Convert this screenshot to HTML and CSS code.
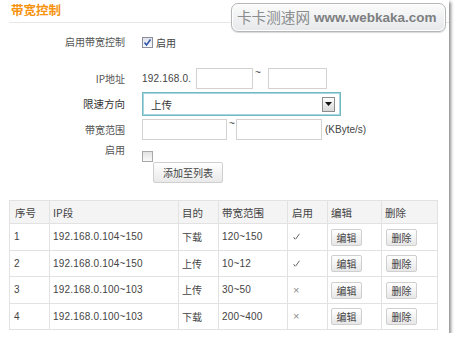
FILE: index.html
```html
<!DOCTYPE html>
<html lang="zh-CN">
<head>
<meta charset="utf-8">
<title>带宽控制</title>
<link rel="stylesheet" href="styles.css">
</head>
<body>
<div class="card">
  <div class="head"><span class="title">带宽控制</span></div>
  <div class="wm"><span class="wm-cn">卡卡测速网</span><span class="wm-en">www.webkaka.com</span></div>

  <div class="form">
    <div class="row r1">
      <span class="lbl">启用带宽控制</span>
      <div class="ctl">
        <span class="cb on"><svg width="9" height="9" viewBox="0 0 9 9"><path d="M1.5 4.5 L3.5 7 L7.5 1.5" fill="none" stroke="#2a4fa8" stroke-width="1.4"/></svg></span>
        <span class="cb-t">启用</span>
      </div>
    </div>
    <div class="row r-ip">
      <span class="lbl">IP地址</span>
      <div class="ctl">
        <span class="num ip-pre">192.168.0.</span>
        <span class="inp w57"></span>
        <span class="tilde t1">~</span>
        <span class="inp w59"></span>
      </div>
    </div>
    <div class="row r-sel">
      <span class="lbl dark">限速方向</span>
      <div class="ctl">
        <div class="sel"><span class="sel-t">上传</span><span class="arrow"><svg width="7" height="4" viewBox="0 0 7 4"><path d="M0 0 L7 0 L3.5 4 Z" fill="#111"/></svg></span></div>
      </div>
    </div>
    <div class="row r-bw">
      <span class="lbl">带宽范围</span>
      <div class="ctl">
        <span class="inp w84"></span>
        <span class="tilde t2">~</span>
        <span class="inp w85"></span>
        <span class="num unit">(KByte/s)</span>
      </div>
    </div>
    <div class="row r-en">
      <span class="lbl">启用</span>
      <div class="ctl"><span class="cb off"></span></div>
    </div>
    <div class="row r-btn">
      <span class="lbl"></span>
      <div class="ctl"><span class="btn">添加至列表</span></div>
    </div>
  </div>

  <table class="tbl">
    <colgroup>
      <col class="c1"><col class="c2"><col class="c3"><col class="c4"><col class="c5"><col class="c6"><col class="c7">
    </colgroup>
    <thead>
      <tr><th>序号</th><th>IP段</th><th>目的</th><th>带宽范围</th><th>启用</th><th>编辑</th><th>删除</th></tr>
    </thead>
    <tbody>
      <tr><td class="num">1</td><td class="num">192.168.0.104~150</td><td>下载</td><td class="num">120~150</td><td><svg class="ok" width="7" height="7" viewBox="0 0 7 7"><path d="M0.8 4.2 L1.8 6.2 M2.6 6.2 L6.4 0.8" fill="none" stroke="#555" stroke-width="0.9"/></svg></td><td><span class="sbtn">编辑</span></td><td><span class="sbtn">删除</span></td></tr>
      <tr><td class="num">2</td><td class="num">192.168.0.104~150</td><td>上传</td><td class="num">10~12</td><td><svg class="ok" width="7" height="7" viewBox="0 0 7 7"><path d="M0.8 4.2 L1.8 6.2 M2.6 6.2 L6.4 0.8" fill="none" stroke="#555" stroke-width="0.9"/></svg></td><td><span class="sbtn">编辑</span></td><td><span class="sbtn">删除</span></td></tr>
      <tr><td class="num">3</td><td class="num">192.168.0.100~103</td><td>上传</td><td class="num">30~50</td><td class="x">×</td><td><span class="sbtn">编辑</span></td><td><span class="sbtn">删除</span></td></tr>
      <tr><td class="num">4</td><td class="num">192.168.0.100~103</td><td>下载</td><td class="num">200~400</td><td class="x">×</td><td><span class="sbtn">编辑</span></td><td><span class="sbtn">删除</span></td></tr>
    </tbody>
  </table>
</div>
</body>
</html>
```

FILE: styles.css
```css
html, body {
  margin: 0;
  padding: 0;
  background: #fff;
}
body {
  font-family: "Noto Sans CJK SC", "Liberation Sans", sans-serif;
  font-size: 10px;
  color: #444;
}
.card {
  position: relative;
  box-sizing: border-box;
  width: 449px;
  height: 333px;
  padding-left: 9px;
  background: #fff;
  box-shadow: 2px 2px 3px rgba(0, 0, 0, 0.45);
}
.head {
  height: 22px;
  border-bottom: 1px solid #e6e6e6;
}
.title {
  display: block;
  padding-left: 2px;
  line-height: 20px;
  font-size: 12.5px;
  font-weight: bold;
  color: #f5930f;
}
.wm {
  position: absolute;
  left: 231px;
  top: 3px;
  box-sizing: border-box;
  width: 215px;
  height: 29px;
  border: 1px solid #b4b6b8;
  border-radius: 7px;
  background: linear-gradient(#fbfbfb, #e6e8ea);
  box-shadow: inset 0 0 0 1px #fff, 0 1px 1px rgba(0,0,0,0.15);
  display: flex;
  align-items: center;
  gap: 4px;
  padding-left: 5px;
  color: #8a8c8e;
}
.wm-cn {
  font-size: 14.6px;
  line-height: 1;
}
.wm-en {
  font-family: "Liberation Sans", sans-serif;
  font-weight: bold;
  font-size: 13.5px;
  color: #7d7f81;
}
.form {
  display: flex;
  flex-direction: column;
}
.row {
  display: flex;
  align-items: center;
  gap: 17px;
}
.lbl {
  width: 116px;
  flex: none;
  text-align: right;
  color: #555;
  line-height: 12px;
}
.lbl.dark {
  color: #333;
  font-size: 10.5px;
}
.ctl {
  display: flex;
  align-items: center;
}
.r1 { margin-top: 12px; height: 14px; }
.r-ip { margin-top: 19px; height: 21px; }
.r-sel { margin-top: 3px; height: 24px; }
.r-bw { margin-top: 3px; height: 21px; }
.r-en { margin-top: 4px; height: 18px; align-items: flex-start; }
.r-btn { height: 21px; }

.num {
  font-family: "Liberation Sans", sans-serif;
  font-size: 10px;
  letter-spacing: 0.2px;
}
.ip-pre {
  width: 54px;
  color: #444;
}
.inp {
  box-sizing: border-box;
  height: 21px;
  border: 1px solid #d2d2d2;
  background: #fff;
}
.w57 { width: 57px; }
.w59 { width: 59px; }
.w84 { width: 85px; }
.w85 { width: 86px; }
.tilde {
  font-family: "Liberation Sans", sans-serif;
  font-size: 10px;
  width: 10px;
  padding-left: 2px;
  box-sizing: border-box;
  align-self: flex-start;
  line-height: 10px;
  color: #444;
}
.tilde.t1 { width: 15px; }
.tilde.t2 { width: 9px; }
.unit {
  margin-left: 3px;
  color: #444;
  letter-spacing: 0;
}
.sel {
  box-sizing: border-box;
  width: 199px;
  height: 24px;
  border: 1px solid #72b9c3;
  box-shadow: inset 0 0 0 1px #a9d6dc;
  display: flex;
  align-items: center;
  justify-content: space-between;
  padding: 0 5px 0 8px;
}
.sel-t {
  font-size: 10.5px;
  color: #333;
}
.arrow {
  box-sizing: border-box;
  width: 13px;
  height: 15px;
  border: 1px solid #8c8c8c;
  background: linear-gradient(#fdfdfd, #d8d8d8);
  display: flex;
  align-items: center;
  justify-content: center;
}
.cb {
  box-sizing: border-box;
  width: 11px;
  height: 11px;
  border: 1px solid #9a9a9a;
  background: linear-gradient(#e2e2e2, #fafafa);
  display: flex;
  align-items: center;
  justify-content: center;
}
.cb.on {
  border-color: #8b8f99;
  background: linear-gradient(#dfe3ea, #f7f8fa);
}
.cb.off {
  margin-top: 7px;
  border-color: #a8a8a8;
}
.cb-t {
  margin-left: 3px;
  color: #444;
}
.btn {
  box-sizing: border-box;
  margin-left: 11px;
  width: 70px;
  height: 21px;
  border: 1px solid #cfcfcf;
  border-radius: 2px;
  background: linear-gradient(#ffffff, #e9e9e9);
  display: flex;
  align-items: center;
  justify-content: center;
  color: #444;
  font-size: 10px;
}
.tbl {
  margin-top: 17px;
  width: 428px;
  border-collapse: collapse;
  table-layout: fixed;
  color: #444;
}
.c1 { width: 40px; }
.c2 { width: 129px; }
.c3 { width: 40px; }
.c4 { width: 69px; }
.c5 { width: 40px; }
.c6 { width: 54px; }
.c7 { width: 56px; }
.tbl th, .tbl td {
  border: 1px solid #e2e2e2;
  text-align: left;
  padding: 0 0 0 3px;
}
.tbl th {
  height: 22px;
  background: #f4f4f4;
  font-weight: normal;
  font-size: 10.5px;
  color: #444;
}
.tbl th:first-child { padding-left: 5px; }
.tbl td {
  height: 25.5px;
}
.tbl td:first-child { padding-left: 4px; }
.tbl td:nth-child(2) { padding-left: 3px; }
.tbl td:nth-child(4) { padding-left: 3px; }
.tbl td:nth-child(5), .tbl th:nth-child(5) { padding-left: 4px; }
.tbl td:nth-child(7) { padding-left: 4px; }
.ok { display: block; margin-left: 1px; }
.x {
  color: #8c8c8c;
  font-family: "Liberation Sans", sans-serif;
  font-size: 11px;
}
.x { padding-left: 5px !important; }
.sbtn {
  box-sizing: border-box;
  display: inline-flex;
  align-items: center;
  justify-content: center;
  width: 31px;
  height: 17px;
  border: 1px solid #cfcfcf;
  border-radius: 2px;
  background: linear-gradient(#ffffff, #e7e7e7);
  color: #444;
  font-size: 10px;
  vertical-align: middle;
}
```
